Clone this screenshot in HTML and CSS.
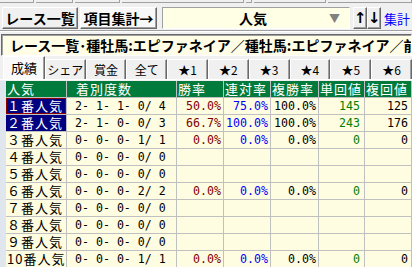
FILE: index.html
```html
<!DOCTYPE html>
<html lang="ja">
  <head>
    <meta charset="UTF-8" />
    <title>項目集計</title>
    <link rel="stylesheet" href="styles.css">
  </head>
  <body>
    <div class="top-strip">
      <span style="width: 35px"></span>
      <span style="width: 37px"></span>
      <span style="width: 46px"></span>
      <span style="width: 127px"></span>
      <span style="width: 6px"></span>
      <span style="width: 74px"></span>
      <span style="width: 87px"></span>
    </div>

    <div class="toolbar">
      <button class="btn">レース一覧</button>
      <button class="btn btn-light">項目集計→</button>
      <div class="combo">
        <span class="combo-text">人気</span>
        <span class="combo-arrow">▼</span>
      </div>
      <button class="btn btn-arrow">↑</button>
      <button class="btn btn-arrow">↓</button>
      <span class="link">集計</span>
    </div>

    <div class="separator"></div>

    <div class="title-box">レース一覧･種牡馬:エピファネイア／種牡馬:エピファネイア／前走</div>

    <div class="tabs">
      <div class="tab active">成績</div>
      <div class="tab">シェア</div>
      <div class="tab">賞金</div>
      <div class="tab">全て</div>
      <div class="tab">★1</div>
      <div class="tab">★2</div>
      <div class="tab">★3</div>
      <div class="tab">★4</div>
      <div class="tab">★5</div>
      <div class="tab">★6</div>
    </div>

    <div class="table-area">
      <div class="grid" id="grid">
        <div class="hd">人気</div>
        <div class="hd hd-count">着別度数</div>
        <div class="hd">勝率</div>
        <div class="hd">連対率</div>
        <div class="hd">複勝率</div>
        <div class="hd">単回値</div>
        <div class="hd">複回値</div>
      </div>
    </div>

    <script>
      // 人気別の集計データ
      const rows = [
        ["１番人気", "2- 1- 1- 0/ 4", "50.0%", "75.0%", "100.0%", "145", "125"],
        ["２番人気", "2- 1- 0- 0/ 3", "66.7%", "100.0%", "100.0%", "243", "176"],
        ["３番人気", "0- 0- 0- 1/ 1", "0.0%", "0.0%", "0.0%", "0", "0"],
        ["４番人気", "0- 0- 0- 0/ 0", "", "", "", "", ""],
        ["５番人気", "0- 0- 0- 0/ 0", "", "", "", "", ""],
        ["６番人気", "0- 0- 0- 2/ 2", "0.0%", "0.0%", "0.0%", "0", "0"],
        ["７番人気", "0- 0- 0- 0/ 0", "", "", "", "", ""],
        ["８番人気", "0- 0- 0- 0/ 0", "", "", "", "", ""],
        ["９番人気", "0- 0- 0- 0/ 0", "", "", "", "", ""],
        ["10番人気", "0- 0- 0- 1/ 1", "0.0%", "0.0%", "0.0%", "0", "0"]
      ];
      const colClass = ["label", "count num", "win num", "ren num", "fuku num", "tan num", "fkv num"];
      const grid = document.getElementById("grid");

      rows.forEach(function (row, i) {
        row.forEach(function (text, j) {
          const cell = document.createElement("div");
          cell.className = "cell " + colClass[j];
          if (j === 0 && i < 2) cell.className += " selected";
          if (j === 0 && i === 0) cell.className += " focused";
          cell.textContent = text;
          grid.appendChild(cell);
        });
      });
    </script>
  </body>
</html>
```

FILE: styles.css
```css
body {
  margin: 0;
  padding: 0;
  width: 412px;
  height: 267px;
  overflow: hidden;
  background-color: #f0f0f0;
  font-family: "Noto Sans CJK JP", sans-serif;
  color: #000;
}
/* ボタンの下端だけ見えている行 */
.top-strip {
  display: flex;
  height: 3px;
  gap: 2px;
}
.top-strip span {
  border-right: 1px solid #a0a0a0;
  border-bottom: 1px solid #a0a0a0;
  background-color: #f0f0f0;
}
.toolbar {
  display: flex;
  align-items: center;
  height: 22px;
  margin-top: 4px;
  padding-left: 2px;
}
.btn {
  height: 22px;
  padding: 0;
  margin: 0;
  background-color: #f0f0f0;
  border: 1px solid;
  border-color: #fff #696969 #696969 #fff;
  box-shadow: inset -1px -1px #a0a0a0;
  font-family: "Noto Sans CJK JP", sans-serif;
  font-size: 14px;
  font-weight: bold;
  line-height: 18px;
  color: #000;
}
.btn:first-child {
  width: 76px;
  margin-right: 2px;
}
.btn-light {
  width: 77px;
  background-color: #f8f8f8;
  margin-right: 5px;
}
.combo {
  display: flex;
  align-items: center;
  width: 186px;
  height: 20px;
  margin-right: 3px;
  border: 1px solid;
  border-color: #a0a0a0 #fff #fff #a0a0a0;
  background-color: #ffffe6;
}
.combo-text {
  flex: 1;
  text-align: center;
  font-size: 14px;
  font-weight: bold;
  padding-left: 14px;
}
.combo-arrow {
  width: 16px;
  color: #808080;
  font-size: 11px;
  margin-right: 4px;
}
.btn-arrow {
  width: 14px;
  font-family: "DejaVu Sans", sans-serif;
  font-size: 15px;
}
.link {
  margin-left: 3px;
  color: #0000ff;
  font-size: 13px;
  white-space: nowrap;
}
.separator {
  height: 0;
  margin-top: 1px;
  border-top: 1px solid #a0a0a0;
  border-bottom: 1px solid #fff;
}
.title-box {
  height: 20px;
  margin: 2px 0 0 1px;
  padding-left: 8px;
  border: 1px solid;
  border-color: #696969 #fff #fff #696969;
  box-shadow: inset 1px 1px #a0a0a0;
  background-color: #fffde6;
  font-size: 14px;
  font-weight: bold;
  line-height: 20px;
  white-space: nowrap;
  overflow: hidden;
}
.tabs {
  display: flex;
  align-items: flex-end;
  height: 23px;
  padding-left: 3px;
  border-bottom: 1px solid #fff;
}
.tab {
  width: 40px;
  height: 19px;
  border-top: 1px solid #fff;
  border-left: 1px solid #fff;
  border-right: 1px solid #696969;
  box-shadow: inset -1px 0 #a0a0a0;
  font-size: 12px;
  line-height: 19px;
  text-align: center;
}
.tab.active {
  width: 41px;
  height: 22px;
  background-color: #f9f9f9;
  font-size: 13px;
  line-height: 22px;
}
.table-area {
  margin-top: 1px;
  display: flex;
}
/* 左側の淡い帯 */
.table-area::before {
  content: "";
  width: 6px;
  height: 200px;
  background-color: #dfe6ee;
}
.grid {
  display: grid;
  grid-template-columns: 60px 109px 46px 46px 47px 45px 46px;
  grid-auto-rows: 16px;
  gap: 1px;
  padding-right: 1px;
  background-color: #c0c0c0;
}
.hd {
  background-color: #007b3c;
  color: #fff;
  font-size: 13px;
  letter-spacing: 1px;
  line-height: 16px;
  padding-left: 1px;
  white-space: nowrap;
}
.hd-count {
  padding-left: 9px;
}
.cell {
  background-color: #fffde1;
  line-height: 16px;
  white-space: nowrap;
}
.label {
  font-size: 13px;
  letter-spacing: 1px;
  padding-left: 1px;
}
.label.selected {
  background-color: #000080;
  color: #fff;
}
.label.focused {
  box-shadow: inset 0 0 0 1px #8b0000;
}
.num {
  font-family: "DejaVu Sans Mono", monospace;
  font-size: 11.6px;
  text-align: right;
  padding-right: 2px;
}
.count {
  text-align: left;
  padding-left: 8px;
}
.win {
  color: #800000;
}
.ren {
  color: #0000ff;
}
.tan {
  color: #008000;
  padding-right: 4px;
}
.fkv {
  padding-right: 3px;
}
```
